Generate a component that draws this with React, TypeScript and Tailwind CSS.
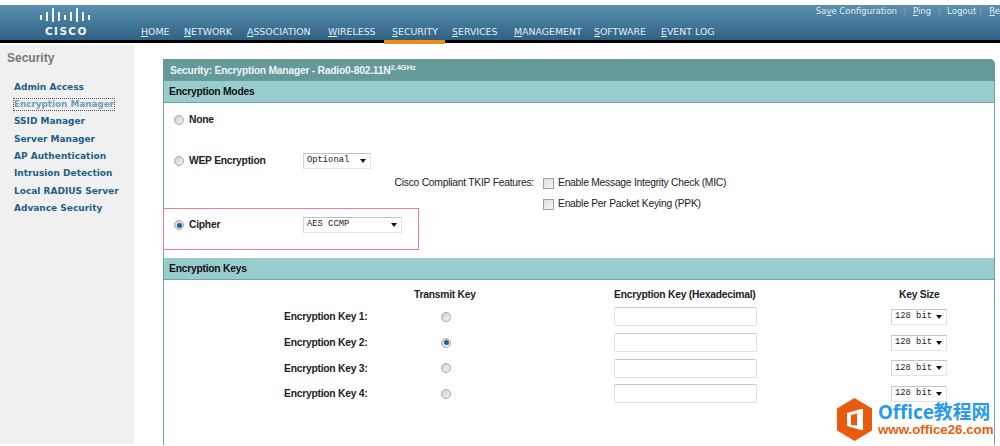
import { ReactNode } from "react";

const NAV = [
    { first: "H", rest: "OME", w: "w-[43px]" },
    { first: "N", rest: "ETWORK", w: "w-[63px]" },
    { first: "A", rest: "SSOCIATION", w: "w-[81px]" },
    { first: "W", rest: "IRELESS", w: "w-[64px]" },
    { first: "S", rest: "ECURITY", w: "w-[60px]" },
    { first: "S", rest: "ERVICES", w: "w-[62px]" },
    { first: "M", rest: "ANAGEMENT", w: "w-[80px]" },
    { first: "S", rest: "OFTWARE", w: "w-[67px]" },
    { first: "E", rest: "VENT LOG", w: "w-[60px]" },
];

const SIDE = ["Admin Access", "Encryption Manager", "SSID Manager", "Server Manager", "AP Authentication", "Intrusion Detection", "Local RADIUS Server", "Advance Security"];

const Radio = ({ checked }: { checked?: boolean }) => (
    <span className="flex w-[10px] h-[10px] shrink-0 items-center justify-center rounded-full border border-[#a6a6a6] bg-gradient-to-br from-[#cfcfcf] to-[#f4f4f4]">
        {checked && <span className="w-[5px] h-[5px] rounded-full bg-[#1d5f8f]" />}
    </span>
);

const Check = () => (
    <span className="block w-[11px] h-[11px] shrink-0 border border-[#a0a0a0] bg-gradient-to-br from-[#dcdcdc] to-[#f8f8f8]" />
);

const Select = ({ value, w }: { value: string; w: string }) => (
    <div className={`${w} h-[16px] flex items-center justify-between pl-[3px] pr-[4px] bg-white border border-[#e2e4ea] border-t-[#c4c4c4] border-l-[#d4d4d4] font-['Liberation_Mono',monospace] font-normal tracking-normal text-[8.8px] text-[#222]`}>
        <span className="whitespace-pre">{value}</span>
        <svg width="6" height="4" viewBox="0 0 6 4"><path d="M0 0h6L3 4z" fill="#111" /></svg>
    </div>
);

const SectionBar = ({ children }: { children: ReactNode }) => (
    <div className="h-[22px] flex items-center pl-[5px] pt-[1px] bg-[#99cccc] border-b border-[#6fa5a3] font-bold text-[#111]">
        {children}
    </div>
);

const KeyRow = ({ n, checked }: { n: number; checked?: boolean }) => (
    <div className="h-[25.7px] flex items-center">
        <div className="w-[277px] pl-[120px] font-bold text-[#222]">Encryption Key {n}:</div>
        <div className="w-[173px] flex justify-start"><Radio checked={checked} /></div>
        <div className="w-[277px]"><div className="w-[143px] h-[19px] bg-white border border-[#e0e0e0] border-t-[#c8c8c8] rounded-[2px]" /></div>
        <Select value="128 bit" w="w-[56px]" />
    </div>
);

export default function App() {
    return (
        <div className="w-[1000px] h-[446px] overflow-hidden relative bg-white font-['Liberation_Sans',Arial,sans-serif]">
            <div className="h-[5px]" />
            {/* header */}
            <div className="h-[35px] flex bg-gradient-to-b from-[#5a90b0] to-[#2f6282] font-['DejaVu_Sans',Verdana,sans-serif] text-[#e4edf3]">
                <div className="w-[141px] flex flex-col items-start pt-[3px] pl-[40px]">
                    <svg width="51" height="14" viewBox="0 0 51 14" fill="#eef3f6">
                        <rect x="0" y="7" width="2" height="5" /><rect x="6" y="4" width="2" height="9" /><rect x="12" y="0" width="2" height="14" />
                        <rect x="18" y="4" width="2" height="9" /><rect x="24" y="7" width="2" height="5" /><rect x="30" y="4" width="2" height="9" />
                        <rect x="36" y="0" width="2" height="14" /><rect x="42" y="4" width="2" height="9" /><rect x="48" y="7" width="2" height="5" />
                    </svg>
                    <div className="text-[10.5px] leading-[11px] mt-[4px] ml-[5px] font-bold tracking-[1.4px] text-[#f2f6f8]">CISCO</div>
                </div>
                <div className="flex-1 flex flex-col">
                    <div className="h-[13px] flex justify-end items-center text-[8.5px] whitespace-nowrap">
                        <span>Sa<u>v</u>e Configuration</span><span className="w-[16px] text-center text-[#7ea6c0]">|</span>
                        <span><u>P</u>ing</span><span className="w-[16px] text-center text-[#7ea6c0]">|</span>
                        <span>Lo<u>g</u>out</span><span className="w-[13px] text-left text-[#7ea6c0] pl-[3px]">|</span>
                        <span><u>R</u>e</span>
                    </div>
                    <div className="flex h-[16px] mt-[6px] items-center text-[9.4px] whitespace-nowrap">
                        {NAV.map((n) => (
                            <div key={n.first + n.rest} className={n.w}>
                                <u>{n.first}</u>{n.rest}
                            </div>
                        ))}
                    </div>
                </div>
            </div>
            <div className="h-[3px] bg-black" />
            <div className="flex h-[401px]">
                <aside className="w-[134px] shrink-0 mt-[2px] bg-[#f0f0f0] pl-[7px] pt-[6px]">
                    <div className="text-[12px] font-bold text-[#777] leading-[14px]">Security</div>
                    <div className="mt-[14px] pl-[7px] font-['DejaVu_Sans',Verdana,sans-serif] font-bold text-[9px] text-[#235f86]">
                        {SIDE.map((s) => (
                            <div key={s} className="h-[17.3px] flex items-center whitespace-nowrap">
                                {s === "Encryption Manager" ? <span className="text-[8.8px] text-[#6f9fb5] border border-dotted border-[#555] -ml-[1px] leading-[11px]">{s}</span> : s}
                            </div>
                        ))}
                    </div>
                </aside>
                <main className="ml-[29px] mr-[5px] flex-1 mt-[16px] text-[10.3px] tracking-[-0.24px]">
                    <div className="h-[22px] flex items-center pl-[7px] pt-[1px] bg-[#669999] rounded-tr-[5px] font-bold text-[#eef5f5]">
                        <span>Security: Encryption Manager - Radio0-802.11N<sup className="text-[7.5px] tracking-normal">2.4GHz</sup></span>
                    </div>
                    <div className="border-x border-[#6fa5a3] h-[364px]">
                        <SectionBar>Encryption Modes</SectionBar>
                        <div className="h-[155px] pl-[10px] pt-[9px] text-[#222]">
                            <div className="h-[16px] flex items-center gap-[5px] font-bold"><Radio /><span>None</span></div>
                            <div className="h-[16px] mt-[25px] flex items-center font-bold">
                                <Radio /><span className="w-[114px] ml-[5px]">WEP Encryption</span>
                                <Select value="Optional" w="w-[68px]" />
                            </div>
                            <div className="h-[16px] mt-[6px] flex items-center">
                                <span className="w-[369px] text-right pr-[9px]">Cisco Compliant TKIP Features:</span>
                                <Check /><span className="ml-[4px]">Enable Message Integrity Check (MIC)</span>
                            </div>
                            <div className="h-[16px] mt-[5px] flex items-center">
                                <span className="w-[369px]" />
                                <Check /><span className="ml-[4px]">Enable Per Packet Keying (PPK)</span>
                            </div>
                            <div className="h-[16px] mt-[5px] flex items-center font-bold">
                                <Radio checked /><span className="w-[114px] ml-[5px]">Cipher</span>
                                <Select value="AES CCMP" w="w-[99px]" />
                            </div>
                        </div>
                        <SectionBar>Encryption Keys</SectionBar>
                        <div className="pt-[8px]">
                            <div className="h-[14px] flex items-center font-bold text-[#222]">
                                <div className="w-[250px]" />
                                <div className="w-[200px]">Transmit Key</div>
                                <div className="w-[285px]">Encryption Key (Hexadecimal)</div>
                                <div>Key Size</div>
                            </div>
                            <div className="mt-[2px]">
                                <KeyRow n={1} />
                                <KeyRow n={2} checked />
                                <KeyRow n={3} />
                                <KeyRow n={4} />
                            </div>
                        </div>
                    </div>
                </main>
            </div>
            {/* orange tab under SECURITY */}
            <div className="absolute left-[384px] top-[40px] w-[61px] h-[4px] bg-[#f08c14]" />
            {/* callout */}
            <div className="absolute left-[163px] top-[208px] w-[256px] h-[42px] border border-[#f07f85]" />
            {/* watermark */}
            <div className="absolute left-[837px] top-[397px] w-[163px] h-[44px] flex items-center">
                <svg width="35" height="43" viewBox="0 0 35 43" className="shrink-0">
                    <path d="M17.5 0 35 10.5v22L17.5 43 0 32.5v-22z" fill="#e85a0c" />
                    <path d="M10 15 24 11h2v21h-2L10 28z" fill="#fff" />
                    <path d="M14 17l6-1.500v12L14 27z" fill="#e85a0c" />
                </svg>
                <div className="ml-[6px] font-bold whitespace-nowrap">
                    <div className="text-[18.8px] leading-[21px] text-[#2a9be8] font-['Noto_Sans','Noto_Sans_CJK_SC',sans-serif]">Office教程网</div>
                    <div className="text-[13.3px] leading-[14px] text-[#e8600c]">www.office26.com</div>
                </div>
            </div>
        </div>
    );
}
